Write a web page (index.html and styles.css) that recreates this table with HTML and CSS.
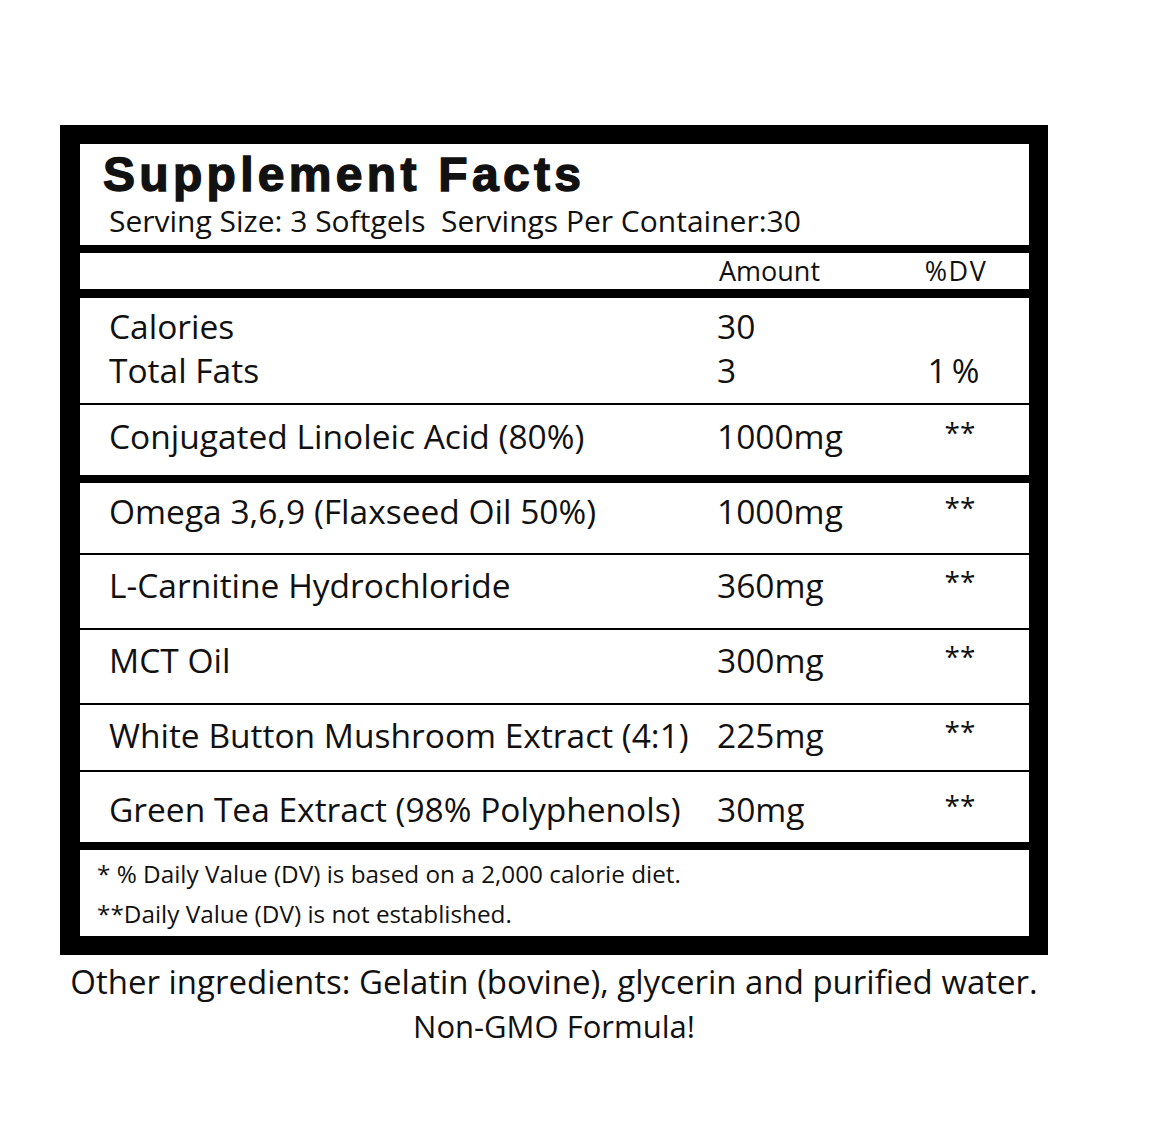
FILE: index.html
```html
<!DOCTYPE html>
<html lang="en">
<head>
<meta charset="utf-8">
<title>Supplement Facts</title>
<link rel="stylesheet" href="styles.css">
</head>
<body>
<main class="page">
  <section class="label">
    <header class="panel head">
      <h1 class="title">Supplement Facts</h1>
      <p class="serving">Serving Size: 3 Softgels&nbsp; Servings Per Container:30</p>
    </header>
    <div class="panel colhead bar-thick">
      <span></span><span class="amt">Amount</span><span class="dv">%DV</span>
    </div>
    <div class="panel row cal bar-thick2">
      <span class="name">Calories</span><span class="amt">30</span><span class="dv"></span>
      <span class="name">Total Fats</span><span class="amt">3</span><span class="dv pct">1%</span>
    </div>
    <div class="panel row r-cla bar-thin">
      <span class="name">Conjugated Linoleic Acid (80%)</span><span class="amt">1000mg</span><span class="dv star">**</span>
    </div>
    <div class="panel row r-omega bar-thick">
      <span class="name">Omega 3,6,9 (Flaxseed Oil 50%)</span><span class="amt">1000mg</span><span class="dv star">**</span>
    </div>
    <div class="panel row r-carn bar-thin">
      <span class="name">L-Carnitine Hydrochloride</span><span class="amt">360mg</span><span class="dv star">**</span>
    </div>
    <div class="panel row r-mct bar-thin">
      <span class="name">MCT Oil</span><span class="amt">300mg</span><span class="dv star">**</span>
    </div>
    <div class="panel row r-wbm bar-thin">
      <span class="name">White Button Mushroom Extract (4:1)</span><span class="amt">225mg</span><span class="dv star">**</span>
    </div>
    <div class="panel row r-tea bar-thin">
      <span class="name">Green Tea Extract (98% Polyphenols)</span><span class="amt">30mg</span><span class="dv star">**</span>
    </div>
    <footer class="panel notes bar-thick">
      <p>* % Daily Value (DV) is based on a 2,000 calorie diet.</p>
      <p>**Daily Value (DV) is not established.</p>
    </footer>
  </section>
  <p class="other">Other ingredients: Gelatin (bovine), glycerin and purified water.</p>
  <p class="gmo">Non-GMO Formula!</p>
</main>
</body>
</html>
```

FILE: styles.css
```css
* { box-sizing: border-box; margin: 0; padding: 0; }
html, body { background: #fff; }
body {
  font-family: "Open Sans", "Noto Sans", sans-serif;
  color: #111;
}
.page {
  width: 988px;
  margin-left: 60px;
  padding-top: 125px;
}
.label {
  background: #000;
  padding: 19px 19px 19px 20px;
  display: flex;
  flex-direction: column;
}
.panel { background: #fff; }
.bar-thick { margin-top: 8px; }
.bar-thick2 { margin-top: 9px; }
.bar-thin { margin-top: 2px; }

.head { height: 101px; padding-left: 23px; }
.title {
  font-family: "Liberation Sans", Arial, sans-serif;
  font-weight: 700;
  font-size: 48px;
  line-height: 48px;
  letter-spacing: 4.3px;
  -webkit-text-stroke: 1.4px #111;
  padding-top: 7px;
}
.serving {
  font-size: 30px;
  line-height: 36px;
  padding-left: 6px;
  padding-top: 4px;
}

.colhead, .row {
  display: grid;
  grid-template-columns: 637px 193px 90px;
}
.colhead {
  height: 36px;
  font-size: 27px;
  line-height: 36px;
}
.colhead .amt { padding-left: 2px; }
.colhead .dv { text-align: center; letter-spacing: 1.5px; padding-left: 2px; white-space: nowrap; }

.row {
  font-size: 33.5px;
  line-height: 44px;
  align-content: start;
}
.row .name { padding-left: 29px; white-space: nowrap; }
.row .dv { text-align: center; }
.row .pct { letter-spacing: 5px; padding-left: 2px; }
.row .star { font-size: 28px; padding-left: 10px; line-height: 36px; }

.cal { height: 105px; padding-top: 6px; }
.r-cla { height: 70px; padding-top: 9px; }
.r-omega { height: 70px; padding-top: 6px; }
.r-carn { height: 73px; padding-top: 8px; }
.r-mct { height: 73px; padding-top: 8px; }
.r-wbm { height: 65px; padding-top: 8px; }
.r-tea { height: 70px; padding-top: 15px; }

.notes {
  height: 86px;
  padding: 4px 0 0 17px;
  font-size: 24.3px;
  line-height: 40px;
}

.other {
  text-align: center;
  font-size: 33px;
  line-height: 44px;
  margin-top: 5px;
}
.gmo {
  text-align: center;
  font-size: 31px;
  line-height: 42px;
  margin-top: 1px;
}
```
